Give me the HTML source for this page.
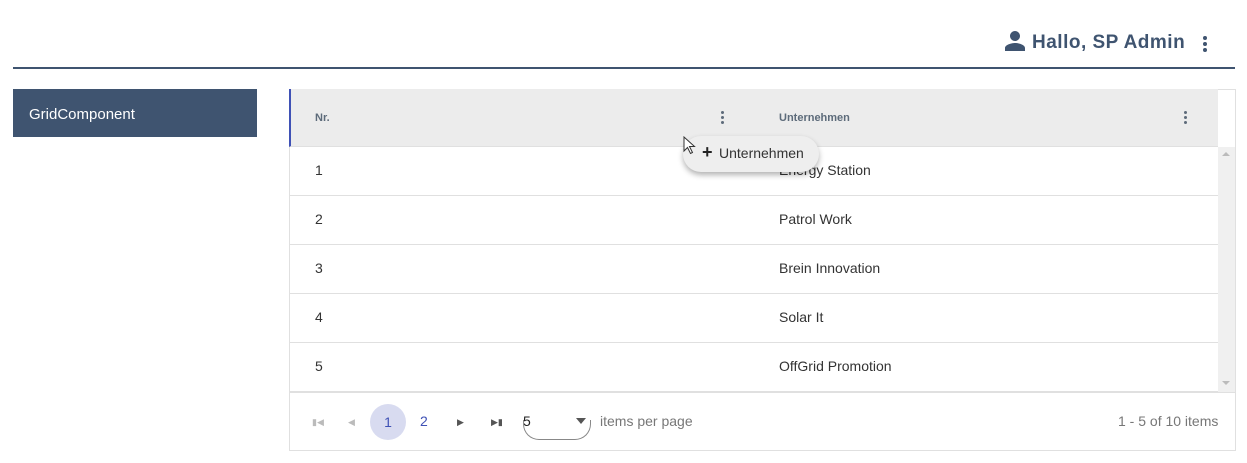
<!DOCTYPE html>
<html><head><style>
*{margin:0;padding:0;box-sizing:border-box}
body{width:1247px;height:463px;background:#fff;font-family:"Liberation Sans",sans-serif;position:relative;overflow:hidden;color:#333}
.a{position:absolute}
.dots{position:absolute;width:4px}
.dots i{display:block;width:3px;height:3px;border-radius:50%;background:#5d6b7a;margin-bottom:2px}
.row{position:absolute;left:290px;width:928px;height:49px;border-bottom:1px solid #e0e0e0;font-size:14px;color:#333}
.row span{position:absolute;top:15px}
</style></head><body>
<svg class="a" style="left:1003px;top:29px" width="24" height="24" viewBox="0 0 24 24"><path fill="#3f5470" d="M12 12c2.7 0 5-2.3 5-5s-2.3-5-5-5-5 2.3-5 5 2.3 5 5 5zm0 2c-3.3 0-10 1.7-10 5v3h20v-3c0-3.3-6.7-5-10-5z"/></svg>
<div class="a" style="left:1032px;top:32px;font-size:19px;font-weight:bold;color:#3f5470;letter-spacing:0.5px">Hallo, SP Admin</div>
<div class="dots" style="left:1203px;top:36px"><i style="background:#3f5470;width:4px;height:4px;margin-bottom:2px"></i><i style="background:#3f5470;width:4px;height:4px;margin-bottom:2px"></i><i style="background:#3f5470;width:4px;height:4px"></i></div>
<div class="a" style="left:13px;top:67px;width:1222px;height:2px;background:#3f5470"></div>
<div class="a" style="left:13px;top:89px;width:244px;height:48px;background:#3f5470;color:#fff;font-size:15px;padding:17px 0 0 16px">GridComponent</div>

<div class="a" style="left:289px;top:89px;width:947px;height:362px;border:1px solid #e0e0e0"></div>
<div class="a" style="left:289px;top:89px;width:929px;height:58px;background:#ececec;border-left:2px solid #3f51b5;border-bottom:1px solid #e0e0e0"></div>
<div class="a" style="left:315px;top:112px;font-size:11px;font-weight:bold;color:#5d6b7a">Nr.</div>
<div class="a" style="left:779px;top:112px;font-size:11px;font-weight:bold;color:#5d6b7a">Unternehmen</div>
<div class="dots" style="left:721px;top:111px"><i></i><i></i><i></i></div>
<div class="dots" style="left:1184px;top:111px"><i></i><i></i><i></i></div>
<div class="a" style="left:1218px;top:147px;width:17px;height:246px;background:#f0f0f0"></div>
<div class="a" style="left:1222px;top:152px;width:0;height:0;border:4px solid transparent;border-bottom-color:#bbb;border-top:0"></div>
<div class="a" style="left:1222px;top:381px;width:0;height:0;border:4px solid transparent;border-top-color:#bbb;border-bottom:0"></div>

<div class="row" style="top:147px"><span style="left:25px">1</span><span style="left:489px">Energy Station</span></div>
<div class="row" style="top:196px"><span style="left:25px">2</span><span style="left:489px">Patrol Work</span></div>
<div class="row" style="top:245px"><span style="left:25px">3</span><span style="left:489px">Brein Innovation</span></div>
<div class="row" style="top:294px"><span style="left:25px">4</span><span style="left:489px">Solar It</span></div>
<div class="row" style="top:343px"><span style="left:25px">5</span><span style="left:489px">OffGrid Promotion</span></div>
<div class="a" style="left:290px;top:392px;width:945px;height:1px;background:#e0e0e0"></div>

<div class="a" style="left:683px;top:136px;width:136px;height:36px;border-radius:18px;background:#eeeeee;box-shadow:0 3px 6px rgba(0,0,0,.3);font-size:14px;color:#333;padding:9px 0 0 20px"><b style="position:absolute;left:19px;top:6px;font-size:18px;color:#222">+</b><span style="margin-left:16px">Unternehmen</span></div>
<svg class="a" style="left:683px;top:136px" width="14" height="20" viewBox="0 0 14 20"><path d="M1 1v14l3.5-3.5 3 6 2-1-3-6h5z" fill="#fff" stroke="#333" stroke-width="1"/></svg>

<div class="a" style="left:312px;top:417px;font-size:9px;color:#bbb">&#9646;&#9664;</div>
<div class="a" style="left:348px;top:417px;font-size:9px;color:#bbb">&#9664;</div>
<div class="a" style="left:370px;top:404px;width:36px;height:36px;border-radius:50%;background:#d8dbf0;color:#3f51b5;font-size:14px;text-align:center;line-height:36px">1</div>
<div class="a" style="left:420px;top:413px;color:#3f51b5;font-size:14px">2</div>
<div class="a" style="left:457px;top:417px;font-size:9px;color:#555">&#9654;</div>
<div class="a" style="left:491px;top:417px;font-size:9px;color:#555">&#9654;&#9646;</div>
<div class="a" style="left:523px;top:413px;font-size:14px;color:#222">5</div>
<div class="a" style="left:576px;top:418px;border:5px solid transparent;border-top:6px solid #555;border-bottom:0"></div>
<div class="a" style="left:523px;top:420px;width:68px;height:20px;border:1px solid #888;border-top:none;border-radius:0 0 16px 16px"></div>
<div class="a" style="left:600px;top:413px;font-size:14px;color:#777">items per page</div>
<div class="a" style="left:1118px;top:413px;font-size:14px;color:#777">1 - 5 of 10 items</div>
</body></html>
